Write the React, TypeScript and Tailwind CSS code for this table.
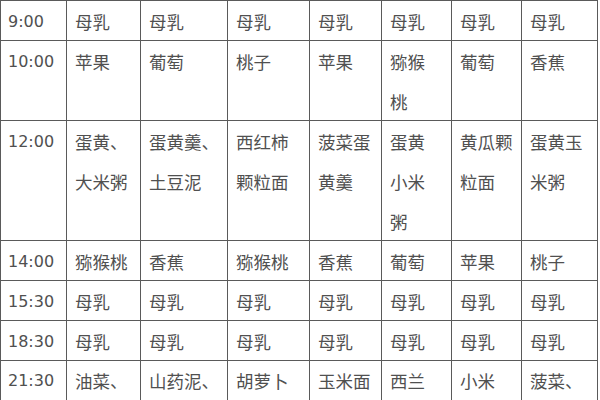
import React from "react";

type Row = { time: string; cells: string[][]; tall?: boolean };

const rows: Row[] = [
  { time: "9:00", cells: [["母乳"], ["母乳"], ["母乳"], ["母乳"], ["母乳"], ["母乳"], ["母乳"]] },
  {
    time: "10:00",
    cells: [["苹果"], ["葡萄"], ["桃子"], ["苹果"], ["猕猴", "桃"], ["葡萄"], ["香蕉"]],
  },
  {
    time: "12:00",
    cells: [
      ["蛋黄、", "大米粥"],
      ["蛋黄羹、", "土豆泥"],
      ["西红柿", "颗粒面"],
      ["菠菜蛋", "黄羹"],
      ["蛋黄", "小米", "粥"],
      ["黄瓜颗", "粒面"],
      ["蛋黄玉", "米粥"],
    ],
  },
  { time: "14:00", cells: [["猕猴桃"], ["香蕉"], ["猕猴桃"], ["香蕉"], ["葡萄"], ["苹果"], ["桃子"]] },
  { time: "15:30", cells: [["母乳"], ["母乳"], ["母乳"], ["母乳"], ["母乳"], ["母乳"], ["母乳"]] },
  { time: "18:30", cells: [["母乳"], ["母乳"], ["母乳"], ["母乳"], ["母乳"], ["母乳"], ["母乳"]] },
  {
    time: "21:30",
    tall: true,
    cells: [["油菜、"], ["山药泥、"], ["胡萝卜"], ["玉米面"], ["西兰"], ["小米"], ["菠菜、"]],
  },
];

const widths = ["w-[66px]", "w-[74px]", "w-[87px]", "w-[82px]", "w-[72px]", "w-[70px]", "w-[70px]", "w-[76px]"];

export default function App() {
  return (
    <div className="w-[600px] h-[400px] overflow-hidden bg-white">
      <table className="table-fixed border-collapse w-[597px] text-[#505050]">
        <colgroup>
          {widths.map((w, i) => (
            <col key={i} className={w} />
          ))}
        </colgroup>
        <tbody>
          {rows.map((r) => (
            <tr key={r.time}>
              <td
                className="border border-[#5a5a5a] align-top p-0 pl-[7px] text-[16px]"
                style={{ fontFamily: '"DejaVu Sans", sans-serif' }}
              >
                <div className={r.tall ? "h-[80px] leading-[39px] -mb-px" : "h-[40px] leading-[41px] -mb-px"}>
                  {r.time}
                </div>
              </td>
              {r.cells.map((lines, i) => (
                <td
                  key={i}
                  className="border border-[#5a5a5a] align-top p-0 pl-[8px] text-[17.5px] whitespace-nowrap"
                  style={{ fontFamily: '"Noto Sans CJK SC", "Noto Sans", sans-serif' }}
                >
                  <div className={r.tall ? "min-h-[80px] -mb-px" : "-mb-px"}>
                    {lines.map((l, j) => (
                      <div key={j} className={r.tall ? "h-[40px] leading-[39px]" : "h-[40px] leading-[41px]"}>
                        {l}
                      </div>
                    ))}
                  </div>
                </td>
              ))}
            </tr>
          ))}
        </tbody>
      </table>
    </div>
  );
}
